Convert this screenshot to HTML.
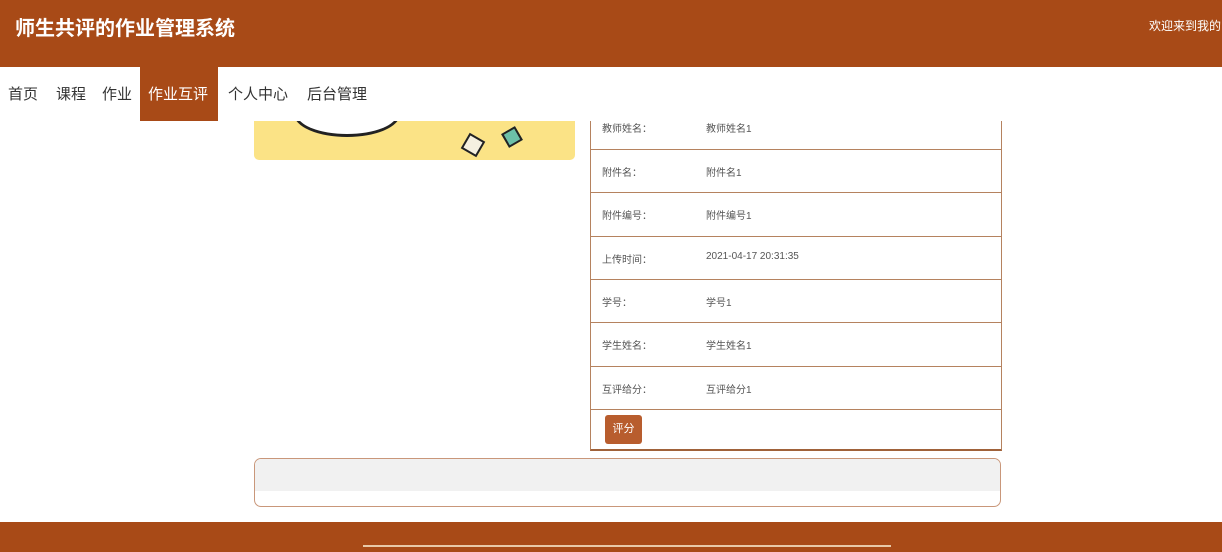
<!DOCTYPE html><html><head><meta charset="utf-8"><style>
body{margin:0;width:1222px;height:552px;overflow:hidden;background:#fff;font-family:"Liberation Sans","Noto Sans CJK SC",sans-serif;position:relative}
.a{position:absolute}
.hd{left:0;top:0;width:1222px;height:67px;background:#a84a17;z-index:2}
.t{left:15px;top:12px;color:#fff;font-size:20px;font-weight:bold;z-index:3}
.w{left:1149px;top:17px;color:#fff;font-size:12px;white-space:nowrap;z-index:3}
.navbg{left:0;top:67px;width:1222px;height:54px;background:#fff;z-index:2}
.nav span{position:absolute;top:83px;font-size:15px;color:#333;z-index:4}
.act{left:140px;top:67px;width:78px;height:54px;background:#a84a17;z-index:3}
.row{left:590px;width:410px;border-left:1px solid #b5825f;border-right:1px solid #b5825f;border-bottom:1px solid #b5825f;font-size:10px;color:#555}
.row b{font-weight:normal;position:absolute;left:11px}
.row i{font-style:normal;position:absolute;left:115px}
</style></head><body>
<div class="a hd"></div><div class="a t">师生共评的作业管理系统</div><div class="a w">欢迎来到我的</div>
<div class="a navbg"></div>
<div class="a act"></div>
<div class="nav"><span style="left:8px">首页</span><span style="left:56px">课程</span><span style="left:102px">作业</span><span style="left:148px;color:#fff">作业互评</span><span style="left:228px">个人中心</span><span style="left:307px">后台管理</span></div>
<div class="a" style="left:254px;top:121px;width:321px;height:39px;background:#fbe386;border-radius:0 0 5px 5px;overflow:hidden">
<div class="a" style="left:40px;top:-30px;width:100px;height:40px;border:3px solid #222;border-radius:50%;background:#fff"></div>
<div class="a" style="left:210px;top:15px;width:14px;height:14px;border:2px solid #222;transform:rotate(30deg);background:#f5f0e0"></div>
<div class="a" style="left:250px;top:8px;width:12px;height:12px;border:2px solid #222;transform:rotate(-30deg);background:#6cc0a8"></div></div>
<div class="a row" style="top:110px;height:39px"><b style="top:10px">教师姓名：</b><i style="top:10px">教师姓名1</i></div>
<div class="a row" style="top:150px;height:42px"><b style="top:14px">附件名：</b><i style="top:14px">附件名1</i></div>
<div class="a row" style="top:193px;height:43px"><b style="top:14px">附件编号：</b><i style="top:14px">附件编号1</i></div>
<div class="a row" style="top:237px;height:42px"><b style="top:14px">上传时间：</b><i style="top:14px">2021-04-17 20:31:35</i></div>
<div class="a row" style="top:280px;height:42px"><b style="top:14px">学号：</b><i style="top:14px">学号1</i></div>
<div class="a row" style="top:323px;height:43px"><b style="top:14px">学生姓名：</b><i style="top:14px">学生姓名1</i></div>
<div class="a row" style="top:367px;height:42px"><b style="top:14px">互评给分：</b><i style="top:14px">互评给分1</i></div>
<div class="a row" style="top:410px;height:39px;border-bottom:2px solid #a0623a"></div>
<div class="a" style="left:605px;top:415px;width:37px;height:29px;background:#b85d2e;border-radius:3px;color:#fff;font-size:11px;line-height:29px;text-align:center">评分</div>
<div class="a" style="left:254px;top:458px;width:745px;height:47px;border:1px solid #c9977a;border-radius:7px;overflow:hidden;background:#fff"><div style="height:32px;background:#f1f1f1"></div></div>
<div class="a" style="left:0;top:522px;width:1222px;height:30px;background:#a84a17"></div>
<div class="a" style="left:363px;top:545px;width:528px;height:2px;background:#e8c9a8"></div>
</body></html>
